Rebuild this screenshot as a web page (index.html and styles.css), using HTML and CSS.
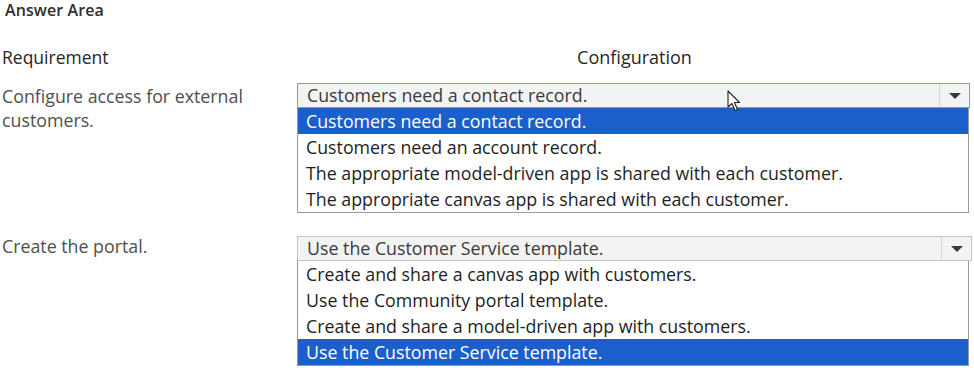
FILE: index.html
```html
<!DOCTYPE html>
<html>
<head>
<meta charset="utf-8">
<link rel="stylesheet" href="styles.css">
</head>
<body>
<div class="page">
  <div class="title">Answer Area</div>
  <div class="grid">
    <div class="hdr">Requirement</div>
    <div class="hdr center">Configuration</div>

    <div class="label">Configure access for external customers.</div>
    <div class="cell">
      <div class="select focused">
        <span class="value">Customers need a contact record.</span>
        <span class="btn"><span class="tri"></span></span>
        <svg class="cursor" width="14" height="22" viewBox="0 0 14 22"><path d="M1 1 L1 17 L5 13.5 L8 20.5 L10.5 19.5 L7.5 12.5 L12.5 12.5 Z" fill="#fff" stroke="#222" stroke-width="1.1" stroke-linejoin="round"/></svg>
      </div>
      <ul class="list">
        <li class="sel">Customers need a contact record.</li>
        <li>Customers need an account record.</li>
        <li>The appropriate model-driven app is shared with each customer.</li>
        <li>The appropriate canvas app is shared with each customer.</li>
      </ul>
    </div>

    <div class="label row2">Create the portal.</div>
    <div class="cell row2">
      <div class="select">
        <span class="value">Use the Customer Service template.</span>
        <span class="btn"><span class="tri"></span></span>
      </div>
      <ul class="list">
        <li>Create and share a canvas app with customers.</li>
        <li>Use the Community portal template.</li>
        <li>Create and share a model-driven app with customers.</li>
        <li class="sel">Use the Customer Service template.</li>
      </ul>
    </div>
  </div>
</div>
</body>
</html>
```
FILE: styles.css
```css
html, body {
  margin: 0;
  padding: 0;
  background: #ffffff;
}
body {
  font-family: "Open Sans", "Noto Sans", sans-serif;
  color: #222;
  width: 974px;
  height: 368px;
  overflow: hidden;
}
.page {
  padding: 1px 2px 0 1px;
}
.title {
  font-size: 16px;
  font-weight: 600;
  color: #2e2e2e;
  line-height: 18px;
  padding-left: 4px;
  letter-spacing: 0.1px;
}
.grid {
  display: grid;
  grid-template-columns: 296px 675px;
  margin-top: 27px;
}
.hdr {
  font-size: 17.5px;
  color: #262626;
  line-height: 22px;
  height: 37px;
  padding-left: 1px;
}
.hdr.center {
  font-size: 18px;
  text-align: center;
  padding-left: 0;
}
.label {
  font-size: 17.8px;
  color: #4f4f4f;
  line-height: 24px;
  padding: 1px 30px 0 1px;
}
.label.row2 {
  padding-top: 0;
  line-height: 20px;
}
.cell {
  display: flex;
  flex-direction: column;
}
.row2 {
  margin-top: 23px;
}
.select {
  position: relative;
  display: flex;
  align-items: stretch;
  height: 23px;
  border: 1px solid #c4c4c4;
  background: #f3f3f3;
  font-size: 17.8px;
  color: #3a3a3a;
}
.select.focused {
  border-color: #8a9ab8;
  background: #f2f3f5;
  margin-right: 2px;
}
.value {
  flex: 1;
  line-height: 23px;
  padding-left: 9px;
  white-space: nowrap;
}
.btn {
  width: 29px;
  border-left: 1px solid #d6d6d6;
  display: flex;
  align-items: center;
  justify-content: center;
}
.tri {
  width: 0;
  height: 0;
  border-left: 6px solid transparent;
  border-right: 6px solid transparent;
  border-top: 6px solid #3a3a3a;
}
.cursor {
  position: absolute;
  left: 429px;
  top: 6px;
}
.list {
  list-style: none;
  margin: 0;
  padding: 0;
  border: 1px solid #9a9a9a;
  border-top: none;
  margin-right: 3px;
  background: #fff;
}
.list li {
  font-size: 17.8px;
  line-height: 26px;
  height: 26px;
  padding-left: 8px;
  color: #1e1e1e;
  white-space: nowrap;
}
.list li.sel {
  background: #1b5fcd;
  color: #ffffff;
}
```
